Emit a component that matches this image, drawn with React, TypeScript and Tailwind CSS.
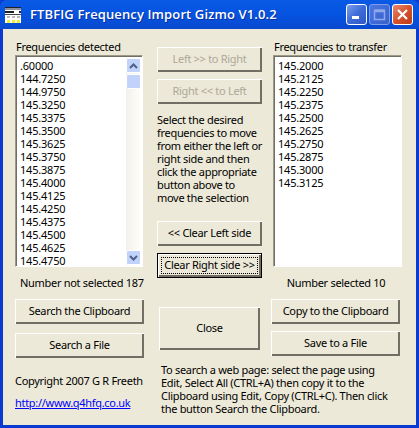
const leftFreqs = ['.60000', '144.7250', '144.9750', '145.3250', '145.3375', '145.3500', '145.3625', '145.3750', '145.3875', '145.4000', '145.4125', '145.4250', '145.4375', '145.4500', '145.4625', '145.4750'];
const rightFreqs = ['145.2000', '145.2125', '145.2250', '145.2375', '145.2500', '145.2625', '145.2750', '145.2875', '145.3000', '145.3125'];

function Btn({ label, disabled, className }: { label: string; disabled?: boolean; className: string }) {
  return (
    <div
      className={`flex items-center justify-center whitespace-nowrap bg-[#ece9d8] shadow-[inset_1px_1px_0_#fff,inset_-2px_-2px_0_#716f64] ${disabled ? 'text-[#aca899]' : 'text-black'} ${className}`}
    >
      {label}
    </div>
  );
}

function ScrollBtn({ up }: { up?: boolean }) {
  return (
    <div className="flex h-[15px] w-[15px] items-center justify-center rounded-[2px] border border-white bg-[#c1d3fb]">
      <svg width="9" height="6" viewBox="0 0 9 6" fill="none" stroke="#4d6185" strokeWidth="2">
        <path d={up ? 'M1 5l3.5-3.5L8 5' : 'M1 1l3.5 3.5L8 1'} />
      </svg>
    </div>
  );
}

function ListBox({ items, scroll, className }: { items: string[]; scroll?: boolean; className: string }) {
  return (
    <div className={`flex h-[212px] justify-between overflow-hidden border border-[#fff] border-t-[#9d9a8a] border-l-[#9d9a8a] bg-white shadow-[inset_1px_1px_0_#716f64] ${className}`}>
      <div className="pl-[4px] pt-[3px] leading-[13px] tracking-[-0.2px] text-black">
        {items.map((f) => (
          <div key={f} className="h-[13px]">{f}</div>
        ))}
      </div>
      {scroll && (
        <div className="mr-[1px] mt-[2px] mb-[1px] flex w-[15px] flex-col bg-gradient-to-r from-[#f3f1ec] to-[#fefefb]">
          <ScrollBtn up />
          <div className="mt-[1px] h-[15px] w-[15px] rounded-[2px] border border-white bg-[#c1d3fb]" />
          <div className="flex-1" />
          <ScrollBtn />
        </div>
      )}
    </div>
  );
}

function AppIcon() {
  return (
    <svg width="16" height="16" viewBox="0 0 16 16" className="shrink-0">
      <rect x="0" y="0" width="16" height="16" fill="#fff" />
      <rect x="0" y="0" width="16" height="1" fill="#222" />
      <rect x="0" y="1" width="16" height="2" fill="#8a8fa0" />
      <rect x="0" y="4" width="16" height="2" fill="#222" />
      <rect x="9" y="4" width="5" height="2" fill="#fff" />
      <rect x="0" y="7" width="16" height="1" fill="#444" />
      <rect x="2" y="9" width="3" height="2" fill="#bbb" />
      <rect x="7" y="9" width="3" height="2" fill="#bbb" />
      <rect x="12" y="9" width="3" height="2" fill="#bbb" />
      <rect x="2" y="13" width="3" height="3" fill="#f5ee2a" />
      <rect x="7" y="13" width="3" height="3" fill="#f5ee2a" />
      <rect x="12" y="13" width="3" height="3" fill="#f5ee2a" />
    </svg>
  );
}

function WinBtn({ kind }: { kind: 'min' | 'max' | 'close' }) {
  const skin =
    kind === 'close'
      ? 'bg-gradient-to-br from-[#e58a6e] via-[#d5532c] to-[#bd3a18]'
      : kind === 'max'
        ? 'border-[#7f9be8] bg-gradient-to-br from-[#4d78e0] via-[#3f6bd8] to-[#3a62c8]'
        : 'border-white bg-gradient-to-br from-[#7d9fe8] via-[#3e6ad8] to-[#2f59c4]';
  return (
    <div className={`flex h-[21px] w-[21px] items-center justify-center rounded-[3px] border ${kind === 'close' ? 'border-white' : ''} ${skin}`}>
      <svg width="13" height="13" viewBox="0 0 13 13">
        {kind === 'min' && <rect x="2" y="8" width="7" height="3" fill="#fff" />}
        {kind === 'max' && <path d="M1.5 3.5h10v8h-10zM1 2h11" fill="none" stroke="#8fa8ec" strokeWidth="1.5" />}
        {kind === 'close' && <path d="M2 2l9 9M11 2l-9 9" stroke="#fff" strokeWidth="2.2" />}
      </svg>
    </div>
  );
}

export default function App() {
  return (
    <div className="flex h-[428px] w-[419px] flex-col overflow-hidden bg-[#0a3bd0] font-['Noto_Sans',sans-serif] text-[11px] tracking-[-0.3px] text-black">
      {/* Title bar */}
      <div className="flex h-[29px] items-center rounded-t-[7px] bg-gradient-to-b from-[#0a5ae6] via-[#0553e0] to-[#0a49cf] pl-[5px] pr-[6px]">
        <AppIcon />
        <div className="ml-[9px] flex-1 whitespace-nowrap font-['Open_Sans',sans-serif] text-[13px] font-semibold tracking-[0.12px] text-white [text-shadow:1px_1px_0_#0a2fa0]">
          FTBFIG Frequency Import Gizmo V1.0.2
        </div>
        <div className="flex gap-[2px]">
          <WinBtn kind="min" />
          <WinBtn kind="max" />
          <WinBtn kind="close" />
        </div>
      </div>

      {/* Client area */}
      <div className="mx-[3px] mb-[3px] flex flex-1 bg-[#ece9d8] pl-[12px] pt-[10px]">
        {/* Left column */}
        <div className="flex w-[129px] flex-col">
          <div className="ml-[1px] h-[16px] whitespace-nowrap leading-[15px]">Frequencies detected</div>
          <ListBox items={leftFreqs} scroll className="w-[128px]" />
          <div className="mt-[8px] h-[24px] whitespace-nowrap pl-[5px] leading-[16px]">Number not selected 187</div>
          <Btn label="Search the Clipboard" className="h-[25px]" />
          <Btn label="Search a File" className="mt-[9px] h-[25px]" />
          <div className="mt-[15px] whitespace-nowrap leading-[15px]">Copyright 2007 G R Freeth</div>
          <div className="mt-[7px] whitespace-nowrap leading-[15px] text-[#0000ff] underline">http://www.q4hfq.co.uk</div>
        </div>

        {/* Middle and right columns */}
        <div className="ml-[13px] flex flex-1 flex-col">
          <div className="flex">
            <div className="flex w-[105px] flex-col pt-[8px]">
              <Btn label="Left >> to Right" disabled className="h-[25px]" />
              <Btn label="Right << to Left" disabled className="mt-[7px] h-[25px]" />
              <p className="mt-[9px] h-[108px] whitespace-nowrap leading-[13px]">
                Select the desired<br />
                frequencies to move<br />
                from either the left or<br />
                right side and then<br />
                click the appropriate<br />
                button above to<br />
                move the selection
              </p>
              <Btn label="<< Clear Left side" className="h-[25px]" />
              <div className="mt-[7px] h-[25px] border border-black">
                <div className="relative h-full">
                  <Btn label="Clear Right side >>" className="h-full" />
                  <div className="absolute inset-[3px] border border-dotted border-black" />
                </div>
              </div>
              <Btn label="Close" className="ml-[2px] mt-[29px] h-[43px] w-[101px]" />
            </div>
            <div className="ml-[9px] flex w-[130px] flex-col">
              <div className="ml-[3px] h-[16px] whitespace-nowrap leading-[15px]">Frequencies to transfer</div>
              <ListBox items={rightFreqs} className="ml-[2px] w-[129px]" />
              <div className="mt-[8px] h-[24px] whitespace-nowrap text-center leading-[16px]">Number selected 10</div>
              <Btn label="Copy to the Clipboard" className="h-[25px] w-[129px]" />
              <Btn label="Save to a File" className="mt-[7px] h-[25px] w-[129px]" />
            </div>
          </div>
          <p className="ml-[4px] mt-[7px] whitespace-nowrap leading-[13px]">
            To search a web page: select the page using<br />
            Edit, Select All (CTRL+A) then copy it to the<br />
            Clipboard using Edit, Copy (CTRL+C). Then click<br />
            the button Search the Clipboard.
          </p>
        </div>
      </div>
    </div>
  );
}
